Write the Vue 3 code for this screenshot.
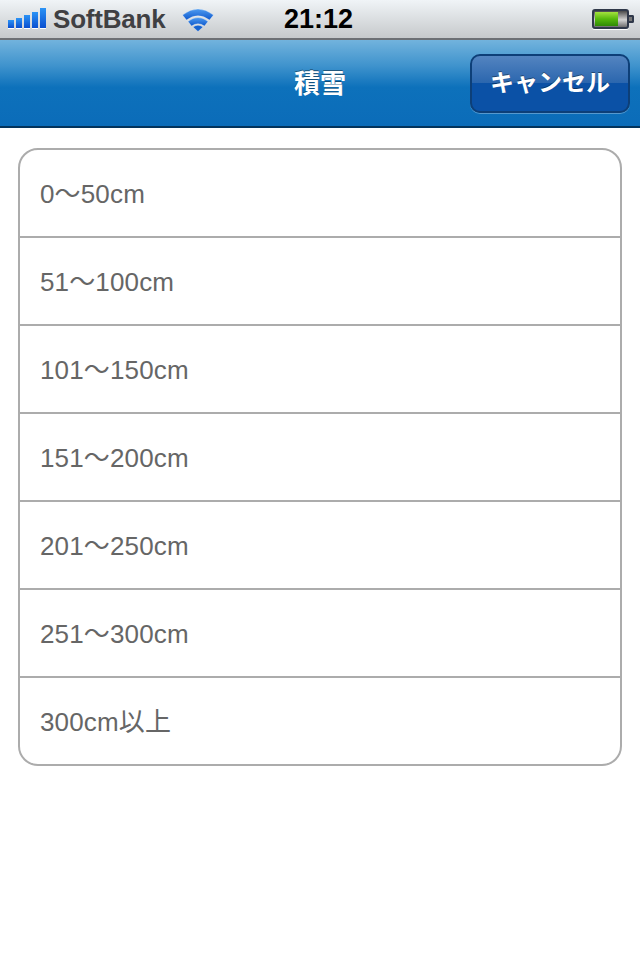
<template>
  <div class="screen">
    <div class="statusbar">
      <div class="status-left">
        <div class="signal">
          <span v-for="h in signalBars" :key="h" class="signal-bar" :style="{ height: h + 'px' }"></span>
        </div>
        <span class="carrier">SoftBank</span>
        <svg class="wifi" width="32" height="25" viewBox="0 0 32 25">
          <defs>
            <linearGradient id="wifiFill" x1="0" y1="0" x2="0" y2="1">
              <stop offset="0" stop-color="#4d9bf0" />
              <stop offset="1" stop-color="#0f58cc" />
            </linearGradient>
          </defs>
          <path d="M0.5 8 Q16 -4 31.5 8 L27.5 13 Q16 4.5 4.5 13 Z" fill="url(#wifiFill)" stroke="#fff" stroke-opacity="0.6" stroke-width="0.5" />
          <path d="M6 14.5 Q16 6.5 26 14.5 L22.5 19 Q16 14.5 9.5 19 Z" fill="url(#wifiFill)" stroke="#fff" stroke-opacity="0.6" stroke-width="0.5" />
          <path d="M11 20 Q16 16.5 21 20 L16 24.5 Z" fill="#1763d0" stroke="#fff" stroke-opacity="0.6" stroke-width="0.5" />
        </svg>
      </div>
      <span class="clock">21:12</span>
      <div class="battery">
        <div class="battery-body">
          <div class="battery-level"></div>
        </div>
        <span class="battery-tip"></span>
      </div>
    </div>

    <header class="navbar">
      <h1 class="nav-title">積雪</h1>
      <button type="button" class="cancel-btn">キャンセル</button>
    </header>

    <main class="content">
      <ul class="list">
        <li v-for="item in items" :key="item" class="list-row">{{ item }}</li>
      </ul>
    </main>
  </div>
</template>

<script setup>
const signalBars = [8, 10, 13, 16, 20]
const items = [
  '0〜50cm',
  '51〜100cm',
  '101〜150cm',
  '151〜200cm',
  '201〜250cm',
  '251〜300cm',
  '300cm以上'
]
</script>

<style scoped>
.screen {
  width: 640px;
  height: 960px;
  background: #fff;
  overflow: hidden;
  font-family: "Liberation Sans", "Noto Sans CJK JP", sans-serif;
}

.statusbar {
  position: relative;
  height: 38px;
  display: flex;
  align-items: center;
  justify-content: space-between;
  padding: 0 6px 0 8px;
  background: linear-gradient(#f0f4f7, #c6c9cb);
  border-bottom: 2px solid #6d7074;
}

.status-left {
  display: flex;
  align-items: center;
}

.signal {
  display: flex;
  align-items: flex-end;
  gap: 2px;
  height: 20px;
  margin-top: -2px;
}

.signal-bar {
  width: 6px;
  background: linear-gradient(#2b93f5, #0a4fd0);
  box-shadow: 0 1px 0 #fff;
}

.carrier {
  margin-left: 7px;
  font-size: 26px;
  font-weight: 700;
  color: #3f4043;
  letter-spacing: -0.2px;
}

.wifi {
  margin-left: 16px;
  margin-top: 1px;
}

.clock {
  position: absolute;
  left: 284px;
  top: 3px;
  font-size: 27px;
  font-weight: 700;
  color: #000;
  line-height: 32px;
}

.battery {
  display: flex;
  align-items: center;
}

.battery-body {
  width: 37px;
  height: 20px;
  box-sizing: border-box;
  padding: 1px;
  border: 2px solid #30394a;
  border-radius: 3px;
  background: linear-gradient(#4a4a4a, #d2d2d2 55%, #6f6f6f);
  box-shadow: 0 1px 0 #fff;
}

.battery-level {
  width: 23px;
  height: 100%;
  background: linear-gradient(#a4e23e, #56b80c 50%, #2f8a06);
}

.battery-tip {
  width: 5px;
  height: 8px;
  box-sizing: border-box;
  border: 2px solid #30394a;
  border-left: 0;
  border-radius: 0 2px 2px 0;
  background: #777;
}

.navbar {
  height: 88px;
  box-sizing: border-box;
  display: flex;
  align-items: center;
  justify-content: flex-end;
  padding: 0 10px 0 0;
  position: relative;
  background: linear-gradient(#72b3dd, #3f93cd 30%, #0d71bb 55%, #0b6cb9);
  border-bottom: 2px solid #03345c;
}

.nav-title {
  position: absolute;
  left: 0;
  right: 0;
  top: 28px;
  margin: 0;
  text-align: center;
  font-size: 26px;
  line-height: 32px;
  font-weight: 700;
  color: #fff;
  text-shadow: 0 -1px 0 rgba(0, 0, 0, 0.4);
}

.cancel-btn {
  width: 160px;
  height: 59px;
  margin-top: 1px;
  padding: 0 0 6px;
  font-family: inherit;
  font-size: 24px;
  font-weight: 700;
  color: #fff;
  border: 2px solid #0d3f78;
  border-radius: 10px;
  background: linear-gradient(#5384c0, #2b66ae 49%, #0b51a6 50%, #0b51a6);
  box-shadow: 0 1px 0 rgba(255, 255, 255, 0.3);
  text-shadow: 0 -1px 0 rgba(0, 0, 0, 0.4);
}

.content {
  padding: 20px 18px 0;
}

.list {
  list-style: none;
  margin: 0;
  padding: 0;
  border: 2px solid #acacac;
  border-radius: 20px;
  background: #fff;
}

.list-row {
  height: 88px;
  box-sizing: border-box;
  padding: 0 20px 3px;
  display: flex;
  align-items: center;
  font-size: 26px;
  letter-spacing: 0.15px;
  color: #666;
  border-top: 2px solid #acacac;
}

.list-row:first-child {
  height: 86px;
  border-top: 0;
}
</style>
